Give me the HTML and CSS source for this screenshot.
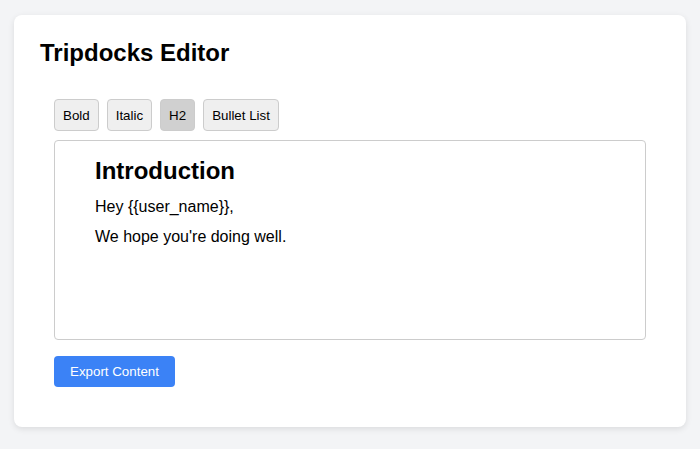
FILE: index.html
```html
<!DOCTYPE html>
<html lang="en">
<head>
<meta charset="utf-8">
<title>Tripdocks Editor</title>
<link rel="stylesheet" href="styles.css">
</head>
<body>
  <div class="card">
    <h1 class="title">Tripdocks Editor</h1>
    <div class="editor-wrap">
      <div class="toolbar">
        <button class="tool">Bold</button>
        <button class="tool">Italic</button>
        <button class="tool is-active">H2</button>
        <button class="tool">Bullet List</button>
      </div>
      <div class="editor">
        <h2 class="doc-heading">Introduction</h2>
        <p class="doc-p">Hey {{user_name}},</p>
        <p class="doc-p">We hope you're doing well.</p>
      </div>
      <button class="export">Export Content</button>
    </div>
  </div>
</body>
</html>
```

FILE: styles.css
```css
html, body {
  margin: 0;
  background: #f3f4f6;
}
body {
  padding: 15px 14px;
  font-family: "Liberation Sans", Arial, sans-serif;
  color: #000;
}
.card {
  background: #fff;
  border-radius: 8px;
  box-shadow: 0 2px 6px rgba(0, 0, 0, 0.1);
  padding: 24px 26px 24px 26px;
  height: 412px;
  box-sizing: border-box;
}
.title {
  margin: 0 0 32px 0;
  font-size: 24px;
  line-height: 28px;
  font-weight: bold;
}
.editor-wrap {
  padding: 0 14px;
}
.toolbar {
  display: flex;
  gap: 8px;
  margin-bottom: 9px;
}
.tool {
  font-family: "Liberation Sans", Arial, sans-serif;
  font-size: 13.333px;
  color: #000;
  background: #efefef;
  border: 1px solid #ccc;
  border-radius: 4px;
  height: 32px;
  padding: 0 8px;
  cursor: pointer;
}
.tool.is-active {
  background: #d0d0d0;
}
.editor {
  border: 1px solid #ccc;
  border-radius: 4px;
  height: 200px;
  box-sizing: border-box;
  padding: 16px 40px;
}
.doc-heading {
  margin: 0 0 13px 0;
  font-size: 24px;
  font-weight: bold;
}
.doc-p {
  margin: 0 0 12px 0;
  font-size: 16px;
}
.export {
  margin-top: 16px;
  font-family: "Liberation Sans", Arial, sans-serif;
  font-size: 13.333px;
  color: #fff;
  background: #3b82f6;
  border: none;
  border-radius: 4px;
  height: 31px;
  padding: 0 16px;
  cursor: pointer;
}
```
